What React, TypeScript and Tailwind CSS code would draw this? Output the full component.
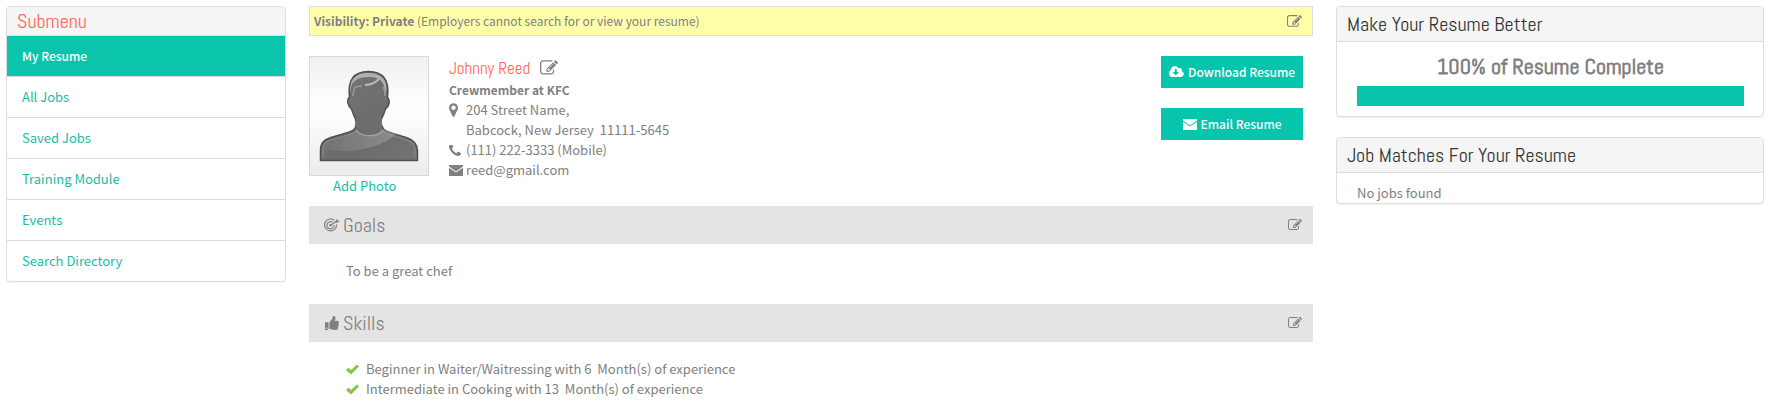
import type { ReactNode } from 'react'
import { FaThumbsUp } from 'react-icons/fa'

const menuItems = ['My Resume', 'All Jobs', 'Saved Jobs', 'Training Module', 'Events', 'Search Directory']

const skills = [
  'Beginner in Waiter/Waitressing with 6\u00a0 Month(s) of experience',
  'Intermediate in Cooking with 13\u00a0 Month(s) of experience',
]

const headingFont = "font-['Abel','Liberation_Sans_Narrow','Roboto_Condensed',sans-serif]"

const paths = {
  edit: 'M888 1184l116-116-152-152-116 116v56h96v96h56zm440-720q-16-16-33 1l-350 350q-17 17-1 33t33-1l350-350q17-17 1-33zm80 594v190q0 119-84.5 203.5t-203.5 84.5h-832q-119 0-203.5-84.5t-84.5-203.5v-832q0-119 84.5-203.5t203.5-84.5h832q63 0 117 25 15 7 18 23 3 17-9 29l-49 49q-14 14-32 8-23-6-45-6h-832q-66 0-113 47t-47 113v832q0 66 47 113t113 47h832q66 0 113-47t47-113v-126q0-13 9-22l64-64q15-15 35-7t20 29zm-96-738l288 288-672 672h-288v-288zm444 132l-92 92-288-288 92-92q28-28 68-28t68 28l152 152q28 28 28 68t-28 68z',
  marker: 'M1152 640q0-106-75-181t-181-75-181 75-75 181 75 181 181 75 181-75 75-181zm256 0q0 109-33 179l-364 774q-16 33-47.5 52t-67.5 19-67.5-19-46.5-52l-365-774q-33-70-33-179 0-212 150-362t362-150 362 150 150 362z',
  phone: 'M1600 1240q0 27-10 70.5t-21 68.5q-21 50-122 106-94 51-186 51-27 0-53-3.5t-57.5-12.5-47-14.5-55.5-20.5-49-18q-98-35-175-83-127-79-264-216t-216-264q-48-77-83-175-3-9-18-49t-20.5-55.5-14.5-47-12.5-57.5-3.5-53q0-92 51-186 56-101 106-122 25-11 68.5-21t70.5-10q14 0 21 3 18 6 53 76 11 19 30 54t35 63.5 31 53.5q3 4 17.5 25t21.5 35.5 7 28.5q0 20-28.5 50t-62 55-62 53-28.5 46q0 9 5 22.5t8.5 20.5 14 24 11.5 19q76 137 174 235t235 174q2 1 19 11.5t24 14 20.5 8.5 22.5 5q18 0 46-28.5t53-62 55-62 50-28.5q14 0 28.5 7t35.5 21.5 25 17.5q25 15 53.5 31t63.5 35 54 30q70 35 76 53 3 7 3 21z',
  cloud: 'M1216 928q0-14-9-23t-23-9h-224v-352q0-13-9.5-22.5t-22.5-9.5h-192q-13 0-22.5 9.5t-9.5 22.5v352h-224q-13 0-22.5 9.5t-9.5 22.5q0 14 9 23l352 352q9 9 23 9t23-9l351-351q10-12 10-24zm640 224q0 159-112.5 271.5t-271.5 112.5h-1088q-185 0-316.5-131.5t-131.5-316.5q0-130 70-240t188-165q-2-30-2-43 0-212 150-362t362-150q156 0 285.5 87t188.5 231q71-62 166-62 106 0 181 75t75 181q0 76-41 138 130 31 213.5 135.5t83.5 238.5z',
}

const Glyph = ({ d, className, viewBox = '0 0 1792 1792' }: { d: string; className: string; viewBox?: string }) => (
  <svg viewBox={viewBox} className={`shrink-0 ${className}`} fill="currentColor" aria-hidden="true">
    <path d={d} />
  </svg>
)

const Envelope = () => (
  <svg viewBox="0 0 14 11" className="h-[11px] w-3.5 shrink-0" fill="currentColor" aria-hidden="true">
    <path d="M.5 0h13q.5 0 .5.5v1L7 6.400 0 1.500v-1Q0 0 .5 0zM0 2.700l7 4.900 7-4.900v7.800q0 .5-.5.5H.5q-.5 0-.5-.5z" />
  </svg>
)

const Check = () => (
  <svg viewBox="0 0 13 11" className="h-[11px] w-[13px] shrink-0 text-[#8bc34a]" fill="currentColor" aria-hidden="true">
    <path d="M.3 5.800 2.100 4q.3-.3.7 0L5 5.900 10.600.7q.4-.3.7 0l1.400 1.300q.4.4 0 .8L5.600 10q-.500.500-1 0L.3 6.400q-.3-.3 0-.6z" />
  </svg>
)

const Target = () => (
  <svg viewBox="0 0 16 14" className="h-3.5 w-4 shrink-0" fill="none" stroke="currentColor" aria-hidden="true">
    <path d="M10.400 2.200A6 6 0 1 0 12.600 6.500" strokeWidth="1.200" />
    <path d="M8.600 4.300A3.600 3.600 0 1 0 10.100 7" strokeWidth="1.200" />
    <circle cx="6.600" cy="7.300" r="1.300" fill="currentColor" stroke="none" />
    <path d="M6.600 7.300 13 3" strokeWidth="1.300" />
    <path d="M10.800 3.800 13 .9l.5 1.500 2.300.4-2.500 2.200z" fill="currentColor" stroke="none" />
  </svg>
)

const Avatar = () => (
  <svg viewBox="0 0 120 120" className="size-[120px]" role="img" aria-label="No photo">
    <defs>
      <linearGradient id="backdrop" x1="0" y1="0" x2="0" y2="1">
        <stop offset="0" stopColor="#f0f0f0" />
        <stop offset="0.45" stopColor="#ffffff" />
        <stop offset="1" stopColor="#ebebeb" />
      </linearGradient>
      <linearGradient id="body" x1="0" y1="0" x2="1" y2="1">
        <stop offset="0" stopColor="#777777" />
        <stop offset="0.6" stopColor="#6b6b6b" />
        <stop offset="1" stopColor="#747474" />
      </linearGradient>
      <linearGradient id="shine" x1="0" y1="0" x2="1" y2="0">
        <stop offset="0" stopColor="#777777" />
        <stop offset="1" stopColor="#a0a0a0" />
      </linearGradient>
    </defs>
    <rect x="0.5" y="0.5" width="119" height="119" fill="url(#backdrop)" stroke="#d8d8d8" />
    <path
      d="M11.500 104.500V95c0-8 3-11 9-13 11-4 22-5 25-9 2-3 2-6 1-10-2-4-3-7-4-10-4-3-5-9-2-12-2-17 4-25.500 19-25.500 15 0 21 9 19 25.500 3 4 2 9-2 12-1 3-2 6-4 10-1 4 0 7 2 10 3 4 14 5 24 9 6 2 10 6 10 13v9.500z"
      fill="url(#body)"
      stroke="#505050"
      strokeWidth="1.500"
    />
    <path
      d="M14 102v-8c0-6 3-8 8-10 11-4 21-5 25-9M106 102v-8c0-5-3-8-9-10-10-4-19-5-23-9"
      fill="none"
      stroke="#8c8c8c"
      strokeWidth="1"
    />
    <path d="M15 93c16 4 42 2 58-6 6-3 11-6 14-9-5-1-10-3-13-5-3 8-24 9-27 1-3 5-14 6-22 9-6 2-9 5-10 10z" fill="url(#shine)" opacity="0.6" />
    <path d="M47 73c4 8 24 8 26 0V60H47z" fill="#6d6d6d" />
    <path d="M47 74c4 7 22 8 27 0" fill="none" stroke="#a0a0a0" strokeWidth="1.500" />
    <path d="M41 37c-1-13 5-20 18-20 14 0 20 7 18 21l-2-8c-2-7-7-9-16-9s-16 4-17 10z" fill="#b0b0b0" />
    <path d="M56 29c5 0 10-2 14-6" fill="none" stroke="#b8b8b8" strokeWidth="2" />
    <path d="M44 40c0-3 1-6 2-9l7-1M74 31c2 3 2 6 2 9" fill="none" stroke="#999999" strokeWidth="1.500" />
  </svg>
)

const EditButton = ({ label, className = 'size-[15px]' }: { label: string; className?: string }) => (
  <button type="button" aria-label={label} className="cursor-pointer">
    <Glyph d={paths.edit} className={className} />
  </button>
)

const Panel = ({ title, children }: { title: string; children: ReactNode }) => (
  <section className="overflow-hidden rounded border border-[#ddd] bg-white shadow-[0_1px_1px_rgba(0,0,0,0.05)]">
    <h2 className={`${headingFont} border-b border-[#ddd] bg-[#f5f5f5] px-2.5 py-1 text-[20px] leading-[26px] text-[#333]`}>
      {title}
    </h2>
    {children}
  </section>
)

const Section = ({ title, icon, children }: { title: string; icon: ReactNode; children: ReactNode }) => (
  <section>
    <div className="flex h-[38px] items-center justify-between bg-[#e4e4e4] pr-[11px] pl-[15px]">
      <h2 className={`${headingFont} flex items-center gap-[3px] text-[20px] leading-6`}>
        {icon}
        {title}
      </h2>
      <EditButton label={`Edit ${title}`} className="size-3.5" />
    </div>
    <div className="pt-[17px] pb-[23px] pl-[37px]">{children}</div>
  </section>
)

export default function App() {
  return (
    <div className="grid grid-cols-[minmax(0,280fr)_minmax(0,1004fr)_minmax(0,428fr)] items-start gap-x-[23px] bg-white pt-1.5 pr-[9px] pl-1.5 font-['Source_Sans_Pro','Noto_Sans_CJK_SC',sans-serif] text-[13px] leading-5 text-[#808080]">
      <nav className="overflow-hidden rounded border border-[#ddd] shadow-[0_1px_1px_rgba(0,0,0,0.05)]">
        <h2 className={`${headingFont} bg-[#f5f5f5] px-2.5 text-[20px] leading-7 text-[#ff6759]`}>Submenu</h2>
        <ul>
          {menuItems.map((item, i) => (
            <li key={item} className="border-t border-[#ddd]">
              <a
                href="#"
                className={`block px-[15px] py-2.5 ${i === 0 ? 'bg-[#0ac5ac] text-[12px] font-medium text-white' : 'text-[#18bda5]'}`}
              >
                {item}
              </a>
            </li>
          ))}
        </ul>
      </nav>

      <main>
        <div className="flex items-center justify-between border border-[#ddd] bg-[#ffffaa] py-1 pr-2.5 pl-1">
          <p className="text-[12px]">
            <b>Visibility: Private</b> (Employers cannot search for or view your resume)
          </p>
          <EditButton label="Edit visibility" />
        </div>

        <div className="mt-5 flex items-start">
          <div className="flex flex-col">
            <Avatar />
            <a href="#" className="pl-6 text-[#18bda5]">
              Add Photo
            </a>
          </div>

          <div className="ml-5 grow">
            <div className="flex h-6 items-center gap-2.5">
              <h1 className={`${headingFont} text-[17px] leading-6 text-[#ff6759]`}>Johnny Reed</h1>
              <EditButton label="Edit name" className="size-[18px]" />
            </div>
            <p className="text-[12px] font-bold">Crewmember at KFC</p>
            <div className="grid grid-cols-[17px_auto] items-center">
              <Glyph d={paths.marker} viewBox="384 128 1024 1536" className="h-[14px] w-[9px]" />
              <span>204 Street Name,</span>
              <span className="col-start-2">Babcock, New Jersey&nbsp; 11111-5645</span>
              <Glyph d={paths.phone} viewBox="192 256 1408 1280" className="h-[11px] w-3" />
              <span>(111) 222-3333 (Mobile)</span>
              <Envelope />
              <span>reed@gmail.com</span>
            </div>
          </div>

          <div className="mr-2.5 flex flex-col gap-5 text-[12px] font-medium text-white">
            <button type="button" className="flex h-8 cursor-pointer items-center justify-center gap-1 bg-[#06c5ac] px-2">
              <Glyph d={paths.cloud} viewBox="0 128 1856 1536" className="h-3 w-[15px]" />
              Download Resume
            </button>
            <button type="button" className="flex h-8 cursor-pointer items-center justify-center gap-1 bg-[#06c5ac] px-2">
              <Envelope />
              Email Resume
            </button>
          </div>
        </div>

        <div className="mt-2.5">
          <Section title="Goals" icon={<Target />}>
            <p>To be a great chef</p>
          </Section>
          <Section title="Skills" icon={<FaThumbsUp className="h-3.5 w-4" />}>
            <ul>
              {skills.map((skill) => (
                <li key={skill} className="flex items-center gap-[7px]">
                  <Check />
                  {skill}
                </li>
              ))}
            </ul>
          </Section>
        </div>
      </main>

      <aside className="flex flex-col gap-5">
        <Panel title="Make Your Resume Better">
          <div className="py-2.5 pr-[19px] pl-5">
            <p id="progress-label" className={`${headingFont} text-center text-[22px] leading-7 font-bold`}>
              100% of Resume Complete
            </p>
            <div
              role="progressbar"
              aria-labelledby="progress-label"
              aria-valuenow={100}
              className="mt-1.5 h-5 bg-[#06c5ac]"
            />
          </div>
        </Panel>
        <Panel title="Job Matches For Your Resume">
          <p className="px-5 pt-2.5">No jobs found</p>
        </Panel>
      </aside>
    </div>
  )
}
